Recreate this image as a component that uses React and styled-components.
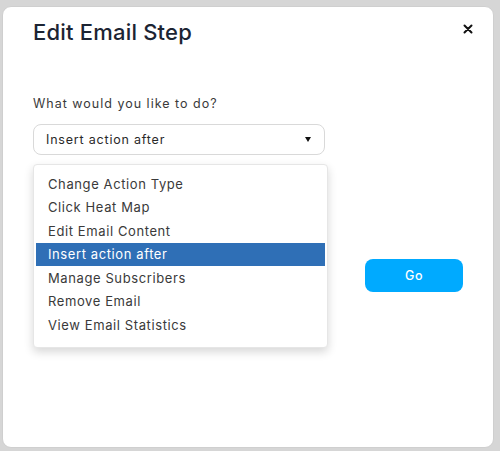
import React from "react";
import styled, { createGlobalStyle } from "styled-components";

const Global = createGlobalStyle`
  html, body { margin: 0; padding: 0; background: #d6d6d6; }
  body { font-family: Inter, "Noto Sans", sans-serif; }
  #root { width: 500px; height: 451px; }
`;

const Backdrop = styled.div`
  width: 500px;
  height: 451px;
  box-sizing: border-box;
  padding: 6px 6px 3px 2px;
  display: flex;
`;

const Card = styled.div`
  flex: 1;
  background: #fff;
  border-radius: 9px;
  border: 1px solid #cfcfcf;
  box-sizing: border-box;
  padding: 10px 30px 0 30px;
  display: flex;
  flex-direction: column;
`;

const Header = styled.div`
  display: flex;
  align-items: center;
  justify-content: space-between;
  height: 30px;
`;

const Title = styled.h2`
  margin: 0;
  font-size: 22px;
  font-weight: 500;
  color: #1c2433;
  letter-spacing: 0.2px;
`;

const Close = styled.button`
  border: 0;
  background: none;
  padding: 0;
  width: 10px;
  height: 10px;
  margin-right: -10px;
  margin-top: -6px;
  display: flex;
  cursor: pointer;
`;

const Label = styled.div`
  margin-top: 49px;
  font-size: 12.5px;
  color: #3a3a3a;
  letter-spacing: 1px;
`;

const SelectWrap = styled.div`
  position: relative;
  width: 292px;
  margin-top: 13px;
`;

const SelectBox = styled.div`
  height: 31px;
  box-sizing: border-box;
  border: 1px solid #d9d9d9;
  border-radius: 8px;
  display: flex;
  align-items: center;
  justify-content: space-between;
  padding: 0 13px 0 12px;
  font-size: 12.5px;
  letter-spacing: 0.8px;
  color: #2a2a2a;
`;

const Caret = styled.span`
  width: 0;
  height: 0;
  border-left: 3px solid transparent;
  border-right: 3px solid transparent;
  border-top: 5px solid #111;
`;

const Menu = styled.ul`
  position: absolute;
  left: 0;
  top: 40px;
  width: 295px;
  margin: 0;
  padding: 7px 2px 10px 2px;
  list-style: none;
  background: #fff;
  border: 1px solid #e6e6e6;
  border-radius: 4px;
  box-shadow: 0 4px 10px rgba(0, 0, 0, 0.16);
  box-sizing: border-box;
`;

const Item = styled.li`
  height: 23.5px;
  display: flex;
  align-items: center;
  padding-left: 12px;
  font-size: 13px;
  letter-spacing: 0.6px;
  color: ${(p) => (p.$active ? "#fff" : "#3a3a3a")};
  background: ${(p) => (p.$active ? "#2f6fb6" : "transparent")};
`;

const ActionRow = styled.div`
  display: flex;
  justify-content: flex-end;
  margin-top: 104px;
`;

const GoButton = styled.button`
  width: 98px;
  height: 33px;
  border: 0;
  border-radius: 8px;
  background: #00aaff;
  color: #fff;
  font-family: inherit;
  font-size: 12.5px;
  letter-spacing: 0.6px;
  font-weight: 500;
  cursor: pointer;
`;

const items = [
  "Change Action Type",
  "Click Heat Map",
  "Edit Email Content",
  "Insert action after",
  "Manage Subscribers",
  "Remove Email",
  "View Email Statistics",
];

export default function App() {
  const selected = "Insert action after";
  return (
    <>
      <Global />
      <Backdrop>
        <Card>
          <Header>
            <Title>Edit Email Step</Title>
            <Close aria-label="Close">
              <svg width="10" height="10" viewBox="0 0 10 10">
                <path d="M1.5 1.5 L8.5 8.5 M8.5 1.5 L1.5 8.5" stroke="#111" strokeWidth="2" strokeLinecap="round" />
              </svg>
            </Close>
          </Header>
          <Label>What would you like to do?</Label>
          <SelectWrap>
            <SelectBox>
              <span>{selected}</span>
              <Caret />
            </SelectBox>
            <Menu>
              {items.map((it) => (
                <Item key={it} $active={it === selected}>
                  {it}
                </Item>
              ))}
            </Menu>
          </SelectWrap>
          <ActionRow>
            <GoButton>Go</GoButton>
          </ActionRow>
        </Card>
      </Backdrop>
    </>
  );
}
